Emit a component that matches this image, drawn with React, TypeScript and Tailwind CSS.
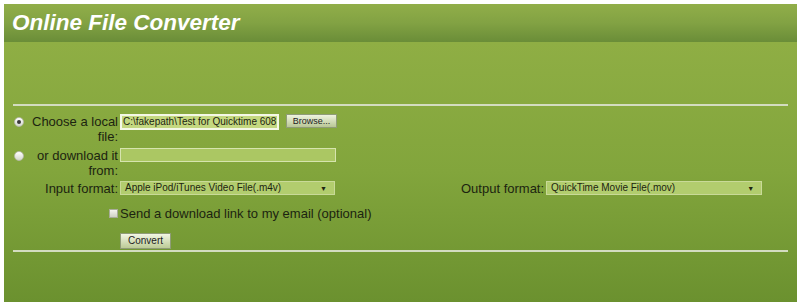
import React from 'react'

const font = { fontFamily: '"Liberation Sans", Arial, sans-serif' }

function Radio({ checked }: { checked?: boolean }) {
  return (
    <span className="mt-[3px] flex h-[10px] w-[10px] items-center justify-center rounded-full border border-[#b8bca8] bg-gradient-to-b from-[#ffffff] to-[#d4d8cc]">
      {checked && <span className="h-[4px] w-[4px] rounded-full bg-[#3a3a3a]" />}
    </span>
  )
}

function Select({ value, width }: { value: string; width: string }) {
  return (
    <div
      className={`flex h-[14px] items-center justify-between border border-[#c9da98] bg-[#b2cd6e] pl-[4px] pr-[7px] text-[10px] leading-none text-[#1c2410] ${width}`}
    >
      <span>{value}</span>
      <span className="text-[7px]">▼</span>
    </div>
  )
}

export default function App() {
  return (
    <div className="h-[306px] w-[800px] bg-white pt-[4px] pl-[4px] pr-[3px] pb-[4px]" style={font}>
      <div className="flex h-[298px] flex-col">
        {/* Header */}
        <div className="flex h-[38px] items-center bg-gradient-to-b from-[#91ae49] via-[#82a243] to-[#6a8d38] pl-[8px]">
          <h1 className="text-[22.5px] font-bold italic text-white leading-none">Online File Converter</h1>
        </div>

        {/* Body */}
        <div className="flex-1 bg-gradient-to-b from-[#8fae44] via-[#82a53c] to-[#6b912f] px-[9px] pt-[62px] text-[13px] leading-[15px] text-[#1c2410]">
          <div className="h-[2px] bg-[#d3dcc0]" />

          {/* Local file */}
          <div className="mt-[8px] flex items-start">
            <div className="w-[17px] pl-[1px]">
              <Radio checked />
            </div>
            <div className="w-[88px] text-right">Choose a local file:</div>
            <div className="ml-[2px] flex h-[16px] w-[159px] items-center overflow-hidden whitespace-nowrap border-2 border-[#f4f8e6] bg-[#c4d880] pl-[1px] text-[10px] leading-none">
              C:\fakepath\Test for Quicktime 608 C
            </div>
            <button className="ml-[7px] h-[14px] w-[51px] border border-[#8f9c78] bg-gradient-to-b from-[#eef3de] to-[#b9c795] text-[9px] leading-none text-[#222]">
              Browse...
            </button>
          </div>

          {/* URL */}
          <div className="mt-[4px] flex items-start">
            <div className="w-[17px] pl-[1px]">
              <Radio />
            </div>
            <div className="w-[88px] text-right">or download it from:</div>
            <div className="ml-[2px] h-[14px] w-[216px] border border-[#d6e4ae] bg-[#abc763]" />
          </div>

          {/* Formats */}
          <div className="mt-[3px] flex items-start">
            <div className="w-[105px] text-right">Input format:</div>
            <div className="ml-[2px]">
              <Select value="Apple iPod/iTunes Video File(.m4v)" width="w-[215px]" />
            </div>
            <div className="ml-[126px]">Output format:</div>
            <div className="ml-[2px]">
              <Select value="QuickTime Movie File(.mov)" width="w-[216px]" />
            </div>
          </div>

          {/* Email */}
          <div className="mt-[10px] flex items-center pl-[96px]">
            <span className="h-[9px] w-[9px] border border-[#a8ac98] bg-gradient-to-b from-[#f4f4ee] to-[#cfd2c4]" />
            <span className="ml-[2px] text-[13px]">Send a download link to my email (optional)</span>
          </div>

          <div className="mt-[11px] pl-[107px]">
            <button className="h-[16px] w-[51px] border border-[#8f9c78] bg-gradient-to-b from-[#f2f6e4] to-[#bccb96] text-[10px] leading-none text-[#222]">
              Convert
            </button>
          </div>

          <div className="mt-[1px] h-[2px] bg-[#d3dcc0]" />
        </div>
      </div>
    </div>
  )
}
